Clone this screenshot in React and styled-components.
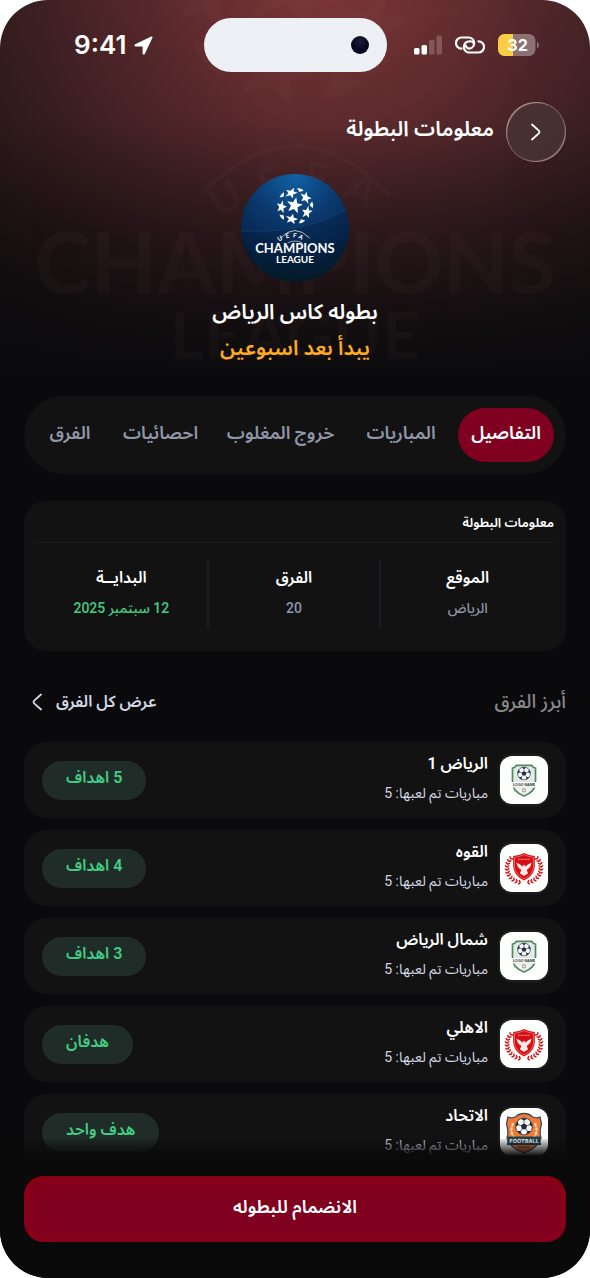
import React, { useState } from 'react';
import styled, { createGlobalStyle, ThemeProvider } from 'styled-components';

const theme = {
  colors: {
    screen: '#0a0a0a',
    card: '#121212',
    line: '#1c1c22',
    accent: '#80001f',
    white: '#ffffff',
    soft: '#d3d8e4',
    muted: '#8f96a8',
    heading: '#8a8a8e',
    green: '#41ce84',
    greenBackground: '#202c27',
    amber: '#fdab1c',
  },
  radii: {
    card: '22px',
    pill: '40px',
    screen: '48px',
  },
};

const GlobalStyle = createGlobalStyle`
  * {
    box-sizing: border-box;
  }
  body {
    margin: 0;
    background-color: #fff;
    font-family: Roboto, 'Noto Sans', 'Noto Sans Arabic', 'DejaVu Sans', sans-serif;
  }
  button {
    border: none;
    padding: 0;
    background: none;
    color: inherit;
    font: inherit;
    cursor: pointer;
  }
  h1, h2, h3, p, ul, dl, dd {
    margin: 0;
    padding: 0;
  }
`;

const Screen = styled.div`
  position: relative;
  display: flex;
  flex-direction: column;
  height: 100vh;
  overflow: hidden;
  border-radius: ${p => p.theme.radii.screen};
  background: linear-gradient(
      180deg,
      rgba(10, 10, 10, 0) 0,
      rgba(10, 10, 10, 0.08) 120px,
      rgba(10, 10, 12, 1) 380px
    ),
    radial-gradient(circle 460px at 56% 0, #7a3536 0, #642d30 28%, #482427 54%, #2c191a 80%, #150f10 100%);
  background-color: ${p => p.theme.colors.screen};
  color: ${p => p.theme.colors.white};
`;

const Ghost = styled.div`
  position: absolute;
  top: -224px;
  left: 50%;
  width: 120%;
  transform: translateX(-50%);
  color: #a88478;
  opacity: 0.04;
  svg {
    display: block;
    width: 100%;
  }
`;

const StatusBar = styled.div`
  position: relative;
  display: grid;
  grid-template-columns: 1fr 183px 1fr;
  align-items: center;
  padding: 18px 24px 0;
`;

const StatusGroup = styled.div`
  display: flex;
  align-items: center;
  justify-content: center;
  gap: ${p => p.$gap};
`;

const Clock = styled.span`
  font-family: Inter, sans-serif;
  font-size: 26px;
  font-weight: 600;
  line-height: 32px;
`;

const Island = styled.div`
  display: flex;
  align-items: center;
  justify-content: flex-end;
  height: 54px;
  padding-right: 18px;
  border-radius: 27px;
  background-color: #edf1f6;
`;

const Camera = styled.span`
  width: 18px;
  height: 18px;
  border-radius: 50%;
  background: radial-gradient(circle at 50% 30%, #1b1d38 0, #05061c 60%);
`;

const Header = styled.header`
  position: relative;
  display: flex;
  align-items: center;
  gap: 12px;
  padding: 30px 24px 0;
`;

const BackButton = styled.button`
  display: flex;
  align-items: center;
  justify-content: center;
  width: 60px;
  height: 60px;
  border-radius: 50%;
  background: linear-gradient(135deg, #49302f, #443031);
  box-shadow: inset 1px 1px 1px #b99595, inset -1px -1px 1px #a58686;
`;

const PageTitle = styled.h1`
  padding-bottom: 6px;
  font-size: 21px;
  font-weight: 600;
  line-height: 28px;
`;

const Hero = styled.section`
  position: relative;
  display: flex;
  flex-direction: column;
  align-items: center;
  padding-top: 12px;
`;

const HeroTitle = styled.h2`
  padding-top: 12px;
  color: ${p => (p.$amber ? p.theme.colors.amber : p.theme.colors.white)};
  font-size: 21px;
  font-weight: 600;
  line-height: 36px;
  & + & {
    padding-top: 0;
  }
`;

const TabBar = styled.nav`
  position: relative;
  display: grid;
  grid-template-columns: 96fr 114fr 127fr 113fr 68fr;
  margin: 30px 24px 0;
  padding: 12px;
  border-radius: ${p => p.theme.radii.pill};
  background-color: ${p => p.theme.colors.card};
`;

const Tab = styled.button`
  height: 54px;
  padding-bottom: 4px;
  border-radius: 27px;
  background-color: ${p => (p.$active ? p.theme.colors.accent : 'transparent')};
  color: ${p => (p.$active ? p.theme.colors.white : p.theme.colors.muted)};
  font-size: 18px;
  font-weight: 600;
  white-space: nowrap;
`;

const InfoCard = styled.section`
  margin: 27px 24px 0;
  padding: 9px 12px 23px;
  border-radius: ${p => p.theme.radii.card};
  background-color: ${p => p.theme.colors.card};
`;

const InfoTitle = styled.h3`
  padding-bottom: 6px;
  border-bottom: 1px solid ${p => p.theme.colors.line};
  font-size: 13px;
  font-weight: 600;
  line-height: 26px;
`;

const InfoGrid = styled.dl`
  display: grid;
  grid-template-columns: repeat(3, 1fr);
  margin-top: 17px;
`;

const InfoCell = styled.div`
  height: 68px;
  text-align: center;
  & + & {
    border-right: 2px solid ${p => p.theme.colors.line};
  }
`;

const InfoLabel = styled.dt`
  padding-top: 3px;
  font-size: 16px;
  font-weight: 600;
  line-height: 30px;
`;

const InfoValue = styled.dd`
  color: ${p => (p.$green ? p.theme.colors.green : p.theme.colors.muted)};
  font-size: 14px;
  font-weight: 500;
  line-height: 30px;
`;

const SectionHead = styled.div`
  display: flex;
  align-items: center;
  justify-content: space-between;
  margin: 34px 24px 0;
  line-height: 34px;
`;

const SectionTitle = styled.h3`
  color: ${p => p.theme.colors.heading};
  font-size: 19px;
  font-weight: 500;
`;

const AllTeams = styled.a`
  display: flex;
  align-items: center;
  gap: 14px;
  padding-left: 8px;
  color: ${p => p.theme.colors.soft};
  font-size: 16px;
  font-weight: 600;
  text-decoration: none;
`;

const TeamList = styled.ul`
  display: flex;
  flex: 1;
  flex-direction: column;
  gap: 12px;
  min-height: 0;
  margin-top: 23px;
  padding: 0 24px;
  overflow: hidden;
  list-style: none;
`;

const TeamRow = styled.li`
  display: flex;
  flex-shrink: 0;
  align-items: center;
  gap: 12px;
  height: 76px;
  padding: 0 18px;
  border-radius: ${p => p.theme.radii.card};
  background-color: ${p => p.theme.colors.card};
`;

const Crest = styled.div`
  width: 48px;
  height: 48px;
  border-radius: 12px;
  background-color: #fdfffc;
  box-shadow: 0 0 2px 2px #1e1e1e;
  svg {
    display: block;
  }
`;

const TeamText = styled.div`
  flex: 1;
  padding-bottom: 4px;
`;

const TeamName = styled.h3`
  font-size: 16px;
  font-weight: 600;
  line-height: 30px;
`;

const TeamGames = styled.p`
  color: ${p => p.theme.colors.soft};
  font-size: 14px;
  line-height: 28px;
`;

const Goals = styled.span`
  padding: 2px 24px 7px;
  border-radius: 20px;
  background-color: ${p => p.theme.colors.greenBackground};
  color: ${p => p.theme.colors.green};
  font-size: 16px;
  font-weight: 600;
  line-height: 30px;
`;

const Footer = styled.footer`
  position: relative;
  padding: 20px 24px 36px;
  background-color: ${p => p.theme.colors.screen};
  &::before {
    content: '';
    position: absolute;
    right: 0;
    bottom: 100%;
    left: 0;
    height: 17px;
    background: linear-gradient(180deg, rgba(10, 10, 10, 0.1), #0a0a0a);
  }
`;

const JoinButton = styled.button`
  width: 100%;
  height: 66px;
  padding-bottom: 4px;
  border-radius: 20px;
  background-color: ${p => p.theme.colors.accent};
  box-shadow: inset 0 3px 6px #80000f, inset 0 2px 14px #98001a;
  color: ${p => p.theme.colors.white};
  font-size: 18px;
  font-weight: 600;
`;

const starPoints = (cx, cy, r, turn = 0) =>
  Array.from({ length: 10 }, (_, i) => {
    const radius = i % 2 ? r * 0.42 : r;
    const a = ((i * 36 + turn - 90) * Math.PI) / 180;
    return `${(cx + radius * Math.cos(a)).toFixed(2)},${(cy + radius * Math.sin(a)).toFixed(2)}`;
  }).join(' ');

const OUTER_STARS = [-16, 52, 118, 194, 266];
const EDGE_STARS = [18, 86, 156, 230, 310];

const LeagueMark = () => (
  <g fill="currentColor">
    <polygon points={starPoints(53.5, 31.5, 8.4, 12)} />
    {OUTER_STARS.map(deg => (
      <polygon
        key={deg}
        points={starPoints(0, 0, 6.8, 180)}
        transform={`rotate(${deg} 54 32) translate(54 18.5) scale(1 0.8)`}
      />
    ))}
    {EDGE_STARS.map(deg => (
      <path
        key={deg}
        d="M50.500 14.600 Q54 13 57.500 14.600 L54 17.400 Z"
        transform={`rotate(${deg} 54 32)`}
      />
    ))}
    <path d="M39.500 64 Q54 49 68.500 64" fill="none" stroke="currentColor" strokeWidth="0.7" />
    <path d="M46.500 69 Q54 65 61.500 69" fill="none" stroke="currentColor" strokeWidth="0.6" />
    <text
      x="42.500 48.700 55.200 61.200"
      y="67.500 64.300 63.200 64"
      rotate="-30 -10 8 28"
      fontFamily="Lato, sans-serif"
      fontSize="6.200"
      fontWeight="700"
    >
      UEFA
    </text>
    <g fontFamily="Lato, sans-serif" fontWeight="700" textAnchor="middle">
      <text x="54" y="79" fontSize="13">
        CHAMPIONS
      </text>
      <text x="54" y="89" fontSize="10">
        LEAGUE
      </text>
    </g>
  </g>
);

const LeagueLogo = () => (
  <svg width="108" height="108" viewBox="0 0 108 108" role="img" aria-label="UEFA Champions League">
    <defs>
      <radialGradient id="logoBlue" cx="50%" cy="0" r="100%">
        <stop offset="0" stopColor="#1062a4" />
        <stop offset="0.4" stopColor="#0b3a70" />
        <stop offset="0.75" stopColor="#05264c" />
        <stop offset="1" stopColor="#041c22" />
      </radialGradient>
      <clipPath id="logoCircle">
        <circle cx="54" cy="54" r="54" />
      </clipPath>
    </defs>
    <g clipPath="url(#logoCircle)">
      <rect width="108" height="108" fill="url(#logoBlue)" />
      <path d="M0 57 Q65 60 108 34 V108 H0 Z" fill="#02142e" opacity="0.25" />
      <path d="M0 57 Q65 60 108 34" fill="none" stroke="#2a5a92" strokeWidth="0.6" opacity="0.6" />
    </g>
    <g color="#fff">
      <LeagueMark />
    </g>
  </svg>
);

const LocationIcon = () => (
  <svg width="19" height="19" viewBox="0 0 19 19" aria-hidden="true">
    <path
      d="M17.300 0.600 L1.200 8.200 C-0.100 8.900 0.300 10.400 1.600 10.400 H8 C8.500 10.400 8.600 10.600 8.600 11 V17.300 C8.600 18.700 10.300 19 10.900 17.700 L18.400 1.700 C18.800 0.800 18.100 0.200 17.300 0.600 Z"
      fill="#fff"
    />
  </svg>
);

const SignalIcon = () => (
  <svg width="28" height="20" viewBox="0 0 28 20" fill="#fff" aria-hidden="true">
    <rect x="0" y="13" width="5.500" height="6.500" rx="1.500" />
    <rect x="7.500" y="10" width="5.500" height="9.500" rx="1.500" />
    <rect x="15" y="5" width="5.500" height="14.500" rx="1.500" opacity="0.2" />
    <rect x="22.500" y="0.500" width="5.500" height="19" rx="1.500" opacity="0.2" />
  </svg>
);

const LinkIcon = () => (
  <svg
    width="30"
    height="18"
    viewBox="0 0 30 18"
    fill="none"
    stroke="#fff"
    strokeWidth="2.200"
    strokeLinecap="round"
    aria-hidden="true"
  >
    <path d="M6.500 12.700 A5.600 5.600 0 0 1 6.600 1.500 H13.500 A5.600 5.600 0 0 1 15 12.500 C13 12.900 11.200 11.500 11 9.800" />
    <path d="M23.500 5.300 A5.600 5.600 0 0 1 23.400 16.500 H14.500 A5.600 5.600 0 0 1 14.300 5.300 C17 5 18.800 6.500 19 8.200" />
  </svg>
);

const BatteryIcon = () => (
  <svg width="41" height="22" viewBox="0 0 41 22" aria-label="32" role="img">
    <defs>
      <clipPath id="batteryBody">
        <rect width="37.500" height="22" rx="6.500" />
      </clipPath>
    </defs>
    <g clipPath="url(#batteryBody)">
      <rect width="38" height="22" fill="#fff" opacity="0.35" />
      <rect width="15" height="22" fill="#fbcd45" />
    </g>
    <path d="M39 7.500 Q41 9 41 11 T39 14.500 Z" fill="#fff" opacity="0.35" />
    <text
      x="19.500"
      y="17"
      fill="#fff"
      fontFamily="Inter, sans-serif"
      fontSize="16"
      fontWeight="700"
      textAnchor="middle"
    >
      32
    </text>
  </svg>
);

const Chevron = ({ left }) => (
  <svg
    width="10"
    height="18"
    viewBox="0 0 10 18"
    fill="none"
    stroke="currentColor"
    strokeWidth="1.800"
    strokeLinecap="round"
    strokeLinejoin="round"
    aria-hidden="true"
  >
    <path d={left ? 'M9 1.500 L2.200 7.600 Q1 9 2.200 10.400 L9 16.500' : 'M1 1.500 L7.800 7.600 Q9 9 7.800 10.400 L1 16.500'} />
  </svg>
);

const Ball = ({ cx, cy, r }) => (
  <g transform={`translate(${cx} ${cy}) scale(${r / 10})`}>
    <circle r="10" fill="#f4f6f7" stroke="#2b3640" strokeWidth="1" />
    <polygon points="0,-4 3.800,-1.200 2.400,3.300 -2.400,3.300 -3.800,-1.200" fill="#222c38" />
    {[0, 72, 144, 216, 288].map(deg => (
      <g key={deg} transform={`rotate(${deg})`}>
        <path d="M0 -4 V-7" stroke="#222c38" strokeWidth="0.8" />
        <path d="M-3.500 -9.300 L0 -6.800 L3.500 -9.300 Q0 -10.600 -3.500 -9.300 Z" fill="#222c38" />
      </g>
    ))}
  </g>
);

const GreenCrest = () => (
  <svg width="48" height="48" viewBox="0 0 48 48" aria-hidden="true">
    <path
      d="M12.500 12 Q15 11.800 16.500 9.300 H31.500 Q33 11.800 35.500 12 V27 Q35.500 35.500 24 40 Q12.500 35.500 12.500 27 Z"
      fill="#e3e8e8"
      stroke="#4f8a5e"
      strokeWidth="1.700"
    />
    <path d="M11 26 H37 V31.500 H11 Z" fill="#fdfffc" />
    <path d="M16 32.500 H32 Q29 36.500 24 38.800 Q19 36.500 16 32.500 Z" fill="#f2f5f2" />
    <Ball cx={24} cy={17.5} r={6.4} />
    <text
      x="24"
      y="29.500"
      fill="#26302b"
      fontFamily="'Liberation Sans', sans-serif"
      fontSize="3.600"
      fontWeight="700"
      textAnchor="middle"
    >
      LOGO NAME
    </text>
    <path d="M15 31.200 H33" stroke="#b8c2ba" strokeWidth="0.6" strokeDasharray="1 1" />
    <circle cx="24" cy="34.400" r="1.600" fill="none" stroke="#9c6464" strokeWidth="0.800" />
  </svg>
);

const WREATH = [0, 1, 2, 3, 4, 5, 6, 7, 8, 9, 10];

const RedCrest = () => (
  <svg width="48" height="48" viewBox="0 0 48 48" aria-hidden="true">
    <path
      d="M24 9 Q29 11.800 34.800 12 V22 Q34.800 31 24 36.500 Q13.200 31 13.200 22 V12 Q19 11.800 24 9 Z"
      fill="#d90d12"
    />
    <path
      d="M24 10.500 Q29 13.100 33.500 13.300 V22 Q33.500 30 24 35 Q14.500 30 14.500 22 V13.300 Q19 13.100 24 10.500 Z"
      fill="none"
      stroke="#f6a9a4"
      strokeWidth="0.500"
    />
    <path d="M18 15.300 H30" stroke="#f6b4b0" strokeWidth="0.900" strokeDasharray="1 0.400" />
    <path
      d="M16.500 18.500 Q20 20 22.600 22.600 L24 20.500 L25.400 22.600 Q28 20 31.500 18.500 Q31 23.500 26.800 25.800 L28 29.500 L24 32 L20 29.500 L21.200 25.800 Q17 23.500 16.500 18.500 Z"
      fill="#fbe9e7"
    />
    {[1, -1].map(side => (
      <g key={side} transform={`translate(24 24) scale(${side} 1)`} fill="#d4181c">
        {WREATH.map(i => {
          const deg = -38 + i * 11.5;
          const a = (deg * Math.PI) / 180;
          return (
            <g key={i} transform={`translate(${17 * Math.cos(a)} ${15 * Math.sin(a)}) rotate(${deg})`}>
              <ellipse cx="-1.300" cy="0" rx="1.700" ry="0.800" transform="rotate(35)" />
              <ellipse cx="1.200" cy="0" rx="1.700" ry="0.800" transform="rotate(-35)" />
            </g>
          );
        })}
      </g>
    ))}
  </svg>
);

const OrangeCrest = () => (
  <svg width="48" height="48" viewBox="0 0 48 48" aria-hidden="true">
    <path
      d="M24 5.500 Q29 5.500 32 8.500 Q36 11 40 9 L41.500 16 Q39 24 41 30 Q38 40 24 45 Q10 40 7 30 Q9 24 6.500 16 L8 9 Q12 11 16 8.500 Q19 5.500 24 5.500 Z"
      fill="#f27a32"
      stroke="#35505f"
      strokeWidth="1.300"
    />
    {[1, -1].map(side => (
      <g key={side} transform={`translate(24 22) scale(${side} 1)`} fill="#fbd9b8">
        {[-25, -5, 15, 35].map(deg => (
          <ellipse key={deg} cx="12.500" cy="0" rx="1.200" ry="2" transform={`rotate(${deg})`} />
        ))}
      </g>
    ))}
    <Ball cx={24} cy={18.5} r={8.4} />
    <path d="M8 28.500 H40 L41 37 H7 Z" fill="#24404f" />
    <text
      x="24"
      y="35"
      fill="#fff"
      fontFamily="'DejaVu Sans Condensed', 'DejaVu Sans', sans-serif"
      fontSize="5.600"
      fontWeight="700"
      textAnchor="middle"
    >
      FOOTBALL
    </text>
    <path d="M18 39 H30" stroke="#24404f" strokeWidth="1.600" strokeDasharray="1.500 0.800" />
  </svg>
);

const crests = {
  green: GreenCrest,
  red: RedCrest,
  orange: OrangeCrest,
};

const tabs = ['التفاصيل', 'المباريات', 'خروج المغلوب', 'احصائيات', 'الفرق'];

const info = [
  { label: 'الموقع', value: 'الرياض' },
  { label: 'الفرق', value: '20' },
  { label: 'البدايــة', value: '12 سبتمبر 2025', green: true },
];

const teams = [
  { name: 'الرياض 1', goals: '5 اهداف', crest: 'green' },
  { name: 'القوه', goals: '4 اهداف', crest: 'red' },
  { name: 'شمال الرياض', goals: '3 اهداف', crest: 'green' },
  { name: 'الاهلي', goals: 'هدفان', crest: 'red' },
  { name: 'الاتحاد', goals: 'هدف واحد', crest: 'orange' },
];

const App = () => {
  const [active, setActive] = useState(tabs[0]);

  return (
    <ThemeProvider theme={theme}>
      <GlobalStyle />
      <Screen dir="rtl" lang="ar">
        <Ghost aria-hidden="true" dir="ltr">
          <svg viewBox="0 0 108 108">
            <LeagueMark />
          </svg>
        </Ghost>

        <StatusBar dir="ltr">
          <StatusGroup $gap="8px">
            <Clock>9:41</Clock>
            <LocationIcon />
          </StatusGroup>
          <Island>
            <Camera />
          </Island>
          <StatusGroup $gap="13px">
            <SignalIcon />
            <LinkIcon />
            <BatteryIcon />
          </StatusGroup>
        </StatusBar>

        <Header>
          <BackButton type="button" aria-label="رجوع">
            <Chevron />
          </BackButton>
          <PageTitle>معلومات البطولة</PageTitle>
        </Header>

        <Hero>
          <LeagueLogo />
          <HeroTitle>بطوله كاس الرياض</HeroTitle>
          <HeroTitle as="p" $amber>
            يبدأ بعد اسبوعين
          </HeroTitle>
        </Hero>

        <TabBar>
          {tabs.map(tab => (
            <Tab key={tab} type="button" $active={tab === active} onClick={() => setActive(tab)}>
              {tab}
            </Tab>
          ))}
        </TabBar>

        <InfoCard>
          <InfoTitle>معلومات البطولة</InfoTitle>
          <InfoGrid>
            {info.map(item => (
              <InfoCell key={item.label}>
                <InfoLabel>{item.label}</InfoLabel>
                <InfoValue $green={item.green}>{item.value}</InfoValue>
              </InfoCell>
            ))}
          </InfoGrid>
        </InfoCard>

        <SectionHead>
          <SectionTitle>أبرز الفرق</SectionTitle>
          <AllTeams href="#teams">
            عرض كل الفرق
            <Chevron left />
          </AllTeams>
        </SectionHead>

        <TeamList id="teams">
          {teams.map(team => {
            const Logo = crests[team.crest];
            return (
              <TeamRow key={team.name}>
                <Crest>
                  <Logo />
                </Crest>
                <TeamText>
                  <TeamName>{team.name}</TeamName>
                  <TeamGames>مباريات تم لعبها: 5</TeamGames>
                </TeamText>
                <Goals>{team.goals}</Goals>
              </TeamRow>
            );
          })}
        </TeamList>

        <Footer>
          <JoinButton type="button">الانضمام للبطوله</JoinButton>
        </Footer>
      </Screen>
    </ThemeProvider>
  );
};

export default App;
